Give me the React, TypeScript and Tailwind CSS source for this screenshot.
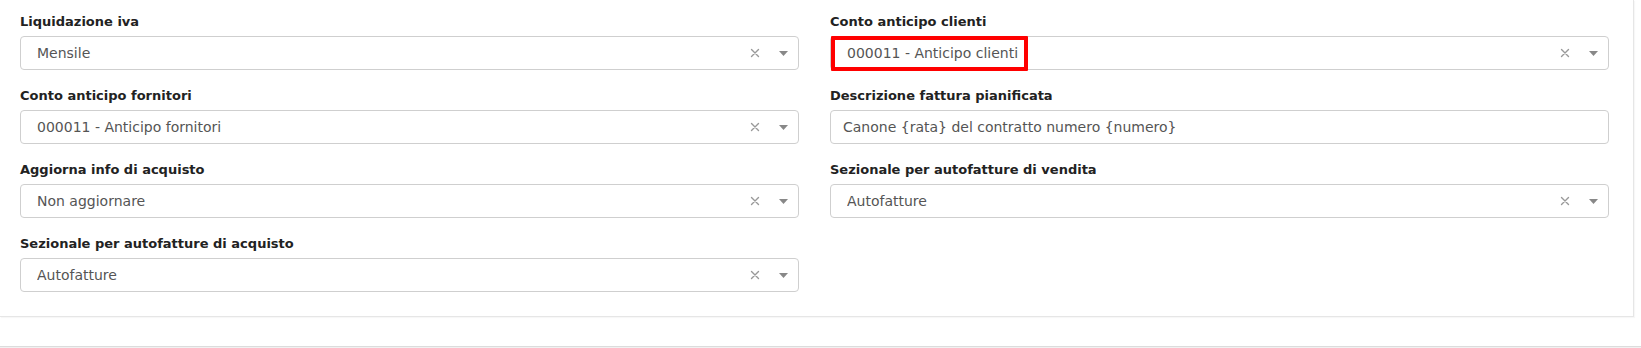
import React from "react";

type Field =
  | { kind: "select"; label: string; value: string; highlight?: boolean }
  | { kind: "input"; label: string; value: string };

const leftFields: Field[] = [
  { kind: "select", label: "Liquidazione iva", value: "Mensile" },
  { kind: "select", label: "Conto anticipo fornitori", value: "000011 - Anticipo fornitori" },
  { kind: "select", label: "Aggiorna info di acquisto", value: "Non aggiornare" },
  { kind: "select", label: "Sezionale per autofatture di acquisto", value: "Autofatture" },
];

const rightFields: Field[] = [
  { kind: "select", label: "Conto anticipo clienti", value: "000011 - Anticipo clienti", highlight: true },
  { kind: "input", label: "Descrizione fattura pianificata", value: "Canone {rata} del contratto numero {numero}" },
  { kind: "select", label: "Sezionale per autofatture di vendita", value: "Autofatture" },
];

function ClearIcon() {
  return (
    <svg width="10" height="10" viewBox="0 0 10 10" className="text-[#999]">
      <path d="M1.5 1.5l7 7M8.5 1.5l-7 7" stroke="currentColor" strokeWidth="1.4" strokeLinecap="round" />
    </svg>
  );
}

function Caret() {
  return (
    <svg width="9" height="5" viewBox="0 0 9 5" className="text-[#888]">
      <path d="M0 0h9L4.5 5z" fill="currentColor" />
    </svg>
  );
}

function FieldBox({ field }: { field: Field }) {
  return (
    <div className="flex flex-col">
      <label className="text-[13px] leading-[20px] font-bold text-[#222] mb-[4px]">
        {field.label}
      </label>
      {field.kind === "select" ? (
        <div className="relative h-[34px] border border-[#cfcfcf] rounded-[4px] bg-white flex items-center pl-[16px]">
          <span className="flex-1 text-[14px] text-[#555] truncate">{field.value}</span>
          <span className="w-[22px] flex justify-center mr-[7px]">
            <ClearIcon />
          </span>
          <span className="w-[20px] flex justify-center mr-[5px]">
            <Caret />
          </span>
          {field.highlight && (
            <div className="absolute left-[0px] top-[-1px] w-[197px] h-[35px] border-[4px] border-[#ff0000] rounded-[1px] pointer-events-none" />
          )}
        </div>
      ) : (
        <div className="h-[34px] border border-[#cfcfcf] rounded-[4px] bg-white flex items-center px-[12px]">
          <span className="text-[14px] text-[#555]">{field.value}</span>
        </div>
      )}
    </div>
  );
}

export default function App() {
  return (
    <div className="w-[1641px] h-[348px] bg-white overflow-hidden font-['DejaVu_Sans',sans-serif]">
      <div className="w-[1634px] border-r border-b border-[#e6e6e6] shadow-[1px_1px_1px_rgba(0,0,0,0.03)] pt-[12px] pb-[24px] pl-[20px] pr-[24px]">
        <div className="grid grid-cols-2 gap-x-[31px]">
          <div className="flex flex-col gap-y-[16px]">
            {leftFields.map(f => (
              <FieldBox key={f.label} field={f} />
            ))}
          </div>
          <div className="flex flex-col gap-y-[16px]">
            {rightFields.map(f => (
              <FieldBox key={f.label} field={f} />
            ))}
          </div>
        </div>
      </div>
      <div className="mt-[29px] h-[2px] border-t border-[#dcdcdc] bg-[#f1f1f1]" />
    </div>
  );
}
